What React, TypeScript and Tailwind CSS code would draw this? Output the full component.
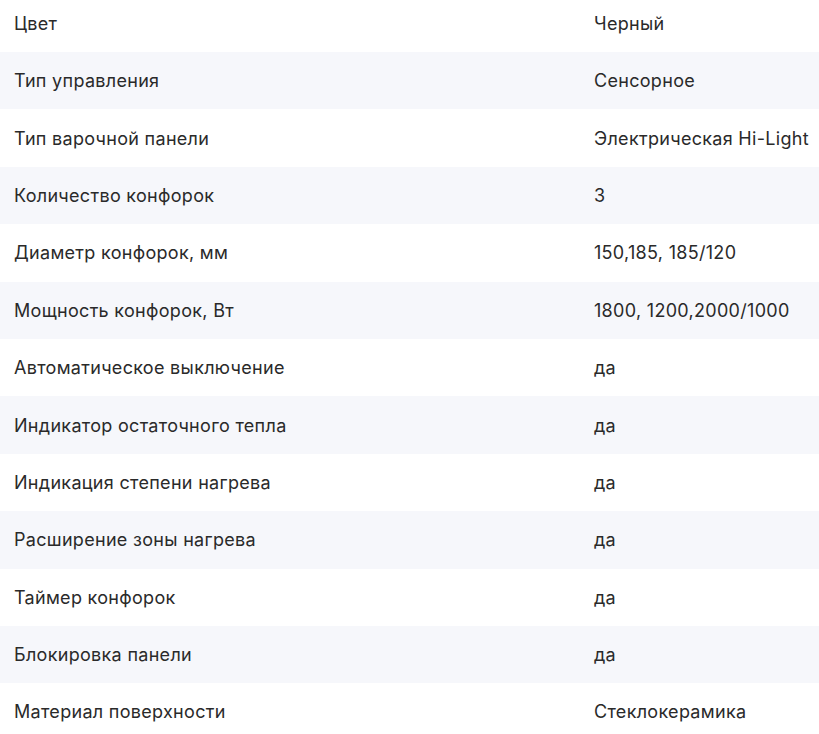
const specs: [string, string][] = [
  ['Цвет', 'Черный'],
  ['Тип управления', 'Сенсорное'],
  ['Тип варочной панели', 'Электрическая Hi-Light'],
  ['Количество конфорок', '3'],
  ['Диаметр конфорок, мм', '150,185, 185/120'],
  ['Мощность конфорок, Вт', '1800, 1200,2000/1000'],
  ['Автоматическое выключение', 'да'],
  ['Индикатор остаточного тепла', 'да'],
  ['Индикация степени нагрева', 'да'],
  ['Расширение зоны нагрева', 'да'],
  ['Таймер конфорок', 'да'],
  ['Блокировка панели', 'да'],
  ['Материал поверхности', 'Стеклокерамика'],
]

export default function App() {
  return (
    <div className="w-[819px] h-[734px] overflow-hidden bg-white font-['Inter',sans-serif] text-[18px] tracking-[0.3px] text-[#2a2a2a]">
      <div className="-mt-[5.4px]">
        {specs.map(([label, value], i) => (
          <div
            key={label}
            className={`flex items-center h-[57.4px] pl-[14px] ${i % 2 === 1 ? 'bg-[#f6f7fb]' : 'bg-white'}`}
          >
            <span className="w-[580px] shrink-0">{label}</span>
            <span className="whitespace-nowrap">{value}</span>
          </div>
        ))}
      </div>
    </div>
  )
}
